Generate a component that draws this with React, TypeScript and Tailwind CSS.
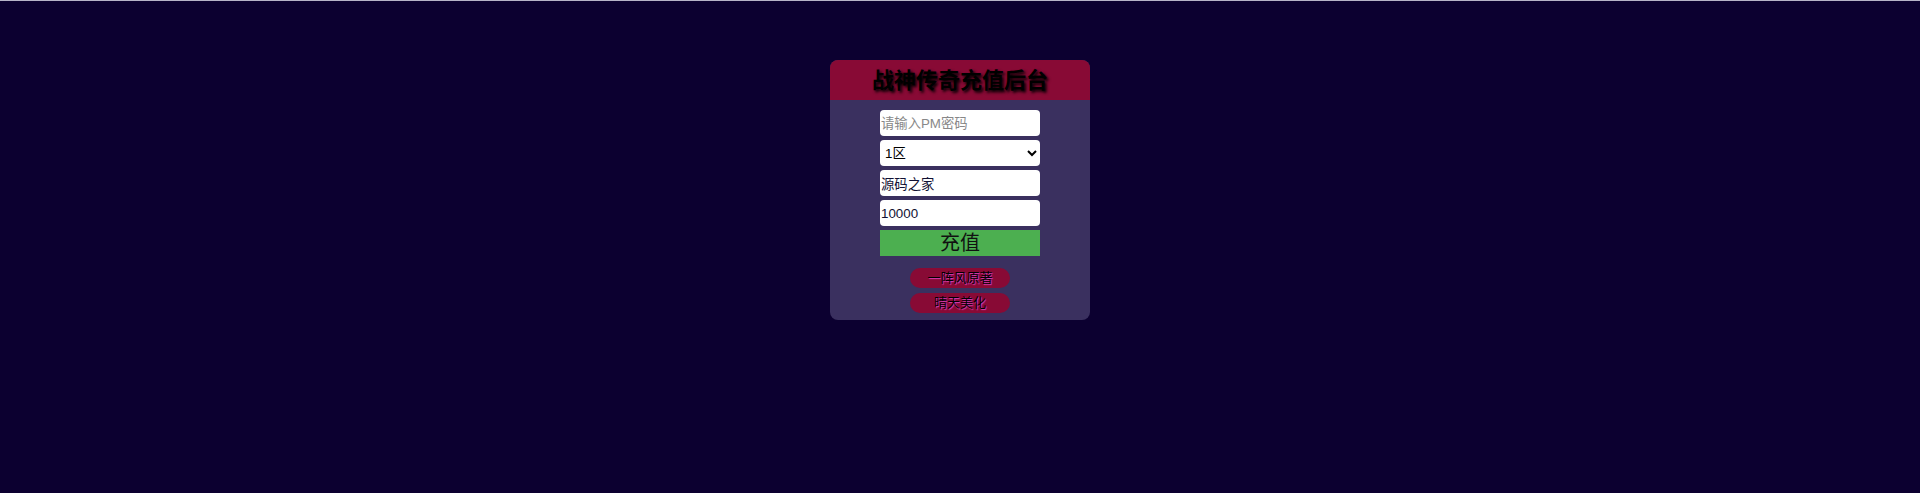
import React from "react";

export default function App() {
  const font = { fontFamily: '"Liberation Sans", "Noto Sans CJK SC", sans-serif' };
  return (
    <div
      className="w-full h-[493px] bg-[#0c0030] border-t border-[#b8b4c8] flex flex-col items-center pt-[59px]"
      style={font}
    >
      <div className="w-[260px] bg-[#3a305f] rounded-lg overflow-hidden flex flex-col items-center pb-[7px]">
        <div className="w-full h-10 bg-[#880a35] flex items-center justify-center">
          <h1 className="text-[22px] font-bold text-black [text-shadow:2px_2px_3px_#000]">
            战神传奇充值后台
          </h1>
        </div>
        <div className="flex flex-col gap-1 pt-[10px] w-[160px]">
          <input
            className="h-[26px] w-full bg-white rounded-sm px-[1px] text-[13.33px] text-[#111133] placeholder:text-[#888] outline-none"
            placeholder="请输入PM密码"
          />
          <select
            className="h-[26px] w-full bg-white rounded-sm px-[1px] text-[13.33px] text-black outline-none"
            defaultValue="1"
          >
            <option value="1">1区</option>
            <option value="2">2区</option>
          </select>
          <input
            className="h-[26px] w-full bg-white rounded-sm px-[1px] text-[13.33px] text-[#111133] outline-none"
            defaultValue="源码之家"
          />
          <input
            className="h-[26px] w-full bg-white rounded-sm px-[1px] text-[13.33px] text-[#111133] outline-none"
            defaultValue="10000"
          />
          <button className="h-[26px] w-full bg-[#4caf50] text-[20px] leading-none text-[#111] flex items-center justify-center">
            充值
          </button>
        </div>
        <div className="flex flex-col gap-[5px] mt-3">
          <a className="w-[100px] h-5 rounded-full bg-[#880a35] text-[13px] text-black flex items-center justify-center [text-shadow:1px_1px_1px_#e040c0]">
            一阵风原著
          </a>
          <a className="w-[100px] h-5 rounded-full bg-[#880a35] text-[13px] text-black flex items-center justify-center [text-shadow:1px_1px_1px_#e040c0]">
            晴天美化
          </a>
        </div>
      </div>
    </div>
  );
}
